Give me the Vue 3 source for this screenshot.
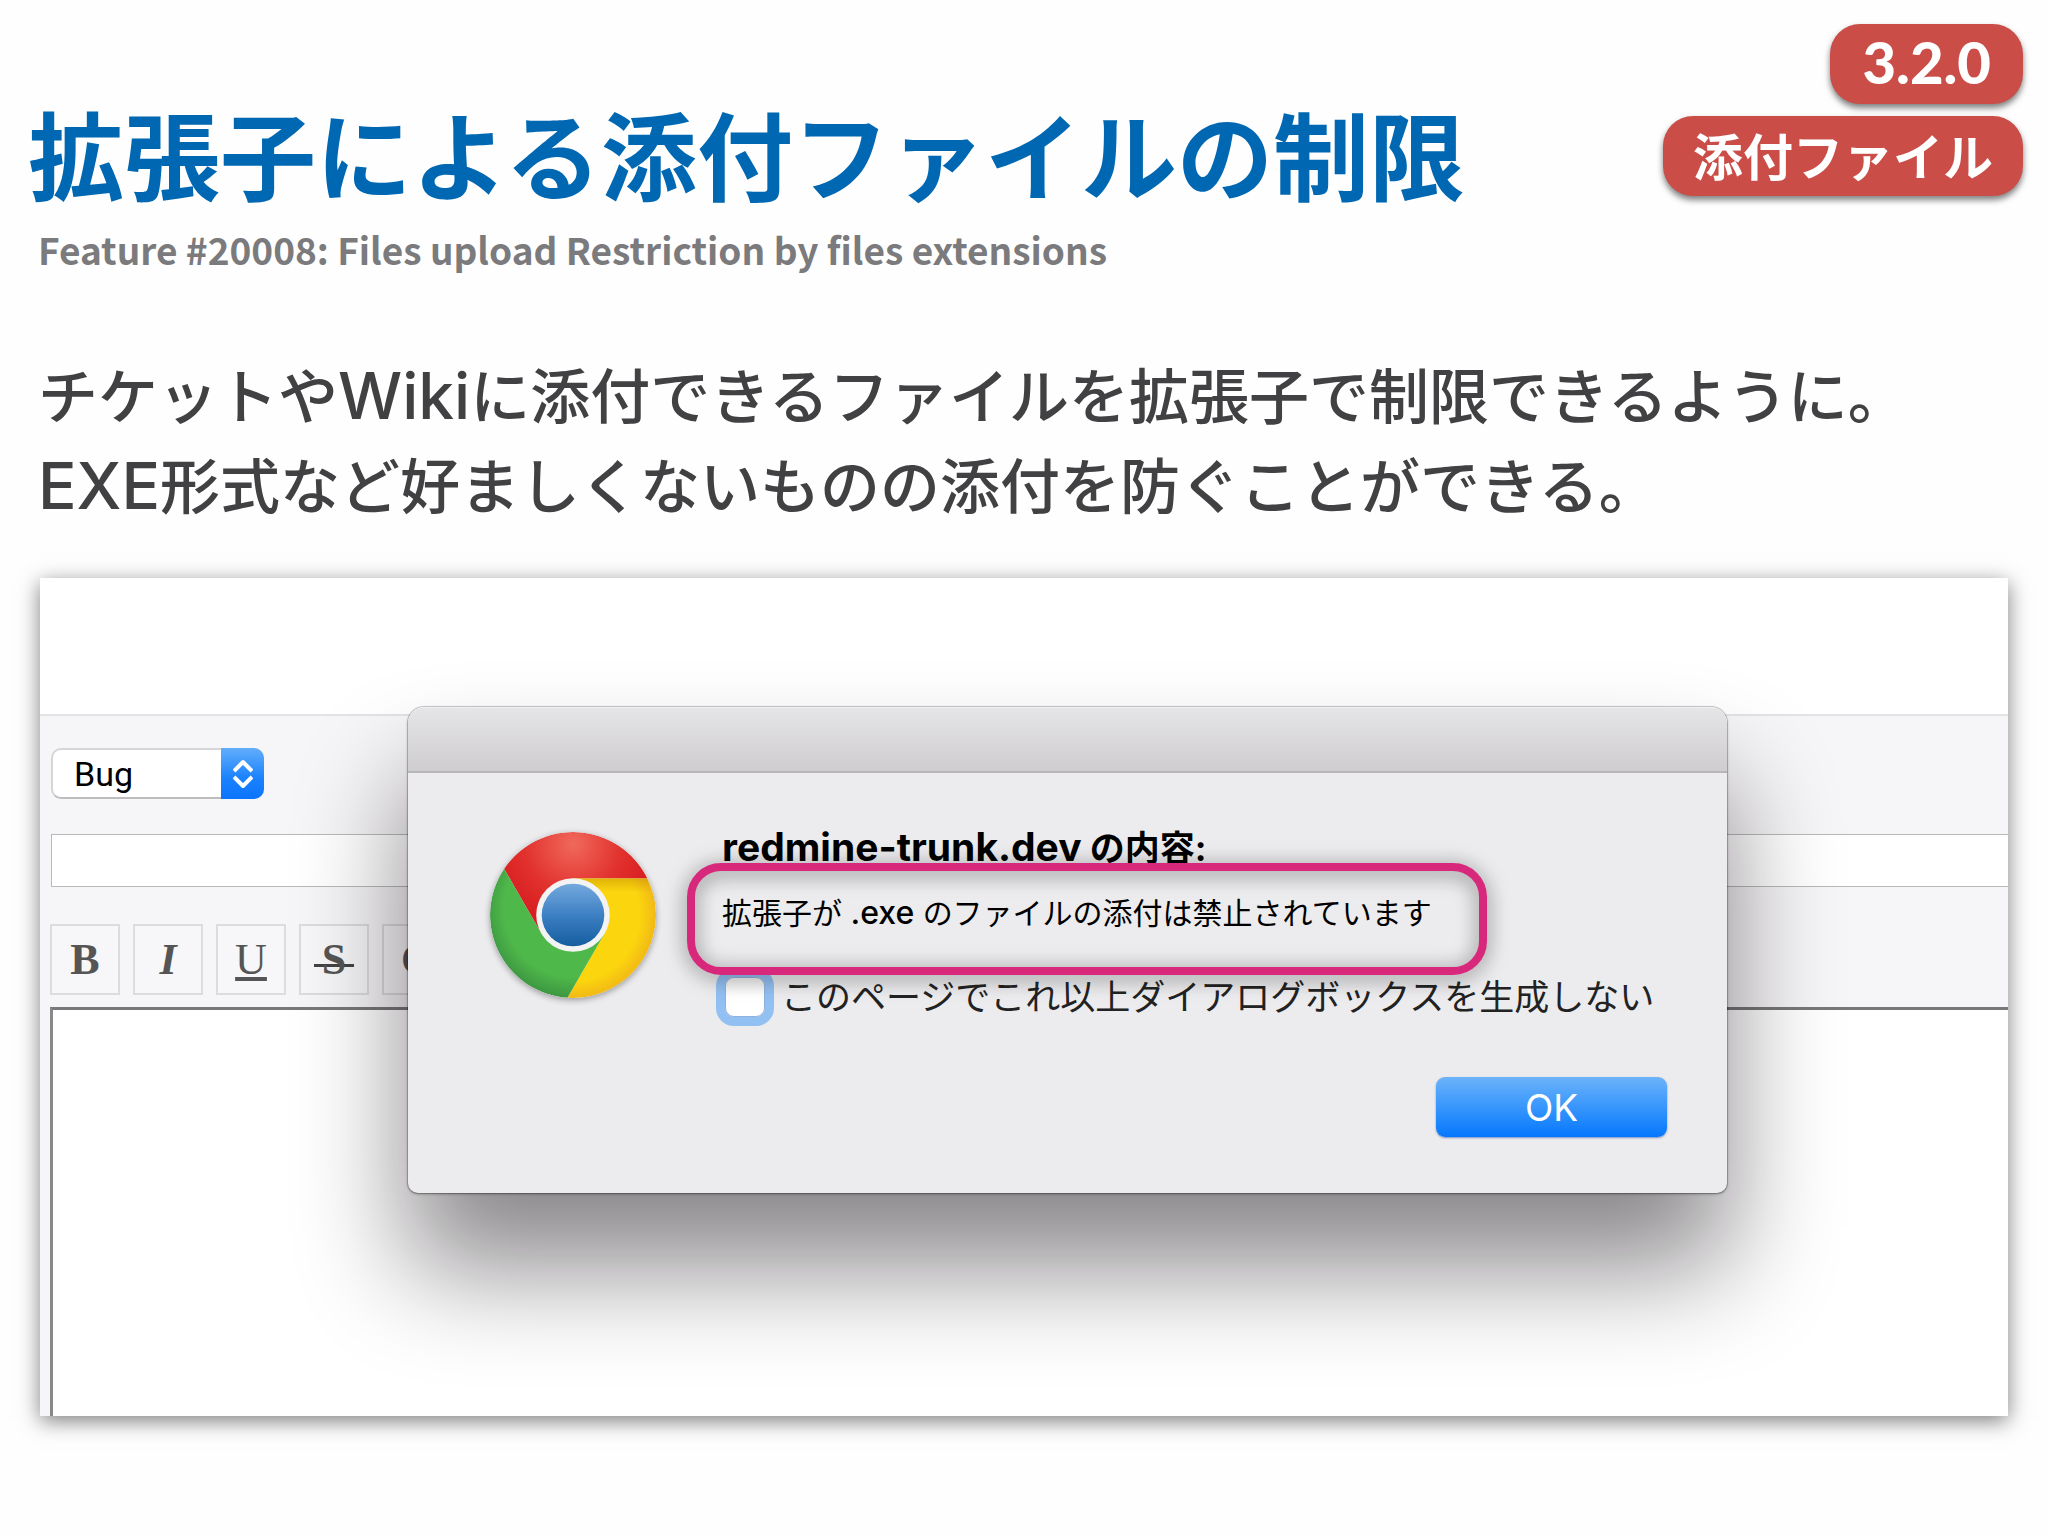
<template>
  <main class="slide">
    <header class="slide-header">
      <div class="heading">
        <h1 class="title">拡張子による添付ファイルの制限</h1>
        <p class="subtitle">Feature #20008: Files upload Restriction by files extensions</p>
      </div>
      <div class="badges">
        <span class="badge badge-version">3.2.0</span>
        <span class="badge">添付ファイル</span>
      </div>
    </header>

    <p class="description">
      チケットや<span class="latin">Wiki</span>に添付できるファイルを拡張子で制限できるように。<br>
      <span class="latin">EXE</span>形式など好ましくないものの添付を防ぐことができる。
    </p>

    <section class="capture">
      <form class="issue-form" @submit.prevent>
        <div class="tracker">
          <select v-model="tracker" class="tracker-select" aria-label="Tracker">
            <option v-for="name in trackers" :key="name" :value="name">{{ name }}</option>
          </select>
          <span class="tracker-arrows">
            <svg width="20" height="30" viewBox="0 0 20 30" fill="none" stroke="#fff" stroke-width="4" stroke-linejoin="round">
              <path d="M1 12 L10 3 L19 12 M1 18 L10 27 L19 18" />
            </svg>
          </span>
        </div>

        <input v-model="subject" class="subject" type="text" aria-label="Subject">

        <div class="toolbar">
          <button
            v-for="tool in tools"
            :key="tool.name"
            type="button"
            class="tool-btn"
            :class="'tool-' + tool.name"
            :title="tool.title"
          >
            <span class="tool-glyph">{{ tool.glyph }}</span>
          </button>
        </div>

        <textarea v-model="body" class="body-text" aria-label="Description"></textarea>
      </form>

      <div class="dialog" role="dialog" aria-labelledby="dialog-title">
        <div class="dialog-bar"></div>
        <div class="dialog-body">
          <svg class="chrome-icon" viewBox="0 0 166 166">
            <defs>
              <radialGradient id="red" cx="83" cy="12" r="80" gradientUnits="userSpaceOnUse">
                <stop offset="0" stop-color="#f0695c" />
                <stop offset="0.6" stop-color="#e2322e" />
                <stop offset="1" stop-color="#d81e21" />
              </radialGradient>
              <radialGradient id="yellow" cx="83" cy="83" r="83" gradientUnits="userSpaceOnUse">
                <stop offset="0.8" stop-color="#fbd50e" />
                <stop offset="1" stop-color="#f2b916" />
              </radialGradient>
              <radialGradient id="green" cx="83" cy="76" r="92" gradientUnits="userSpaceOnUse">
                <stop offset="0.75" stop-color="#4fb84a" />
                <stop offset="1" stop-color="#3a9340" />
              </radialGradient>
              <linearGradient id="blue" x1="0" y1="0" x2="0" y2="1">
                <stop offset="0" stop-color="#74a9dd" />
                <stop offset="0.5" stop-color="#3d80c4" />
                <stop offset="1" stop-color="#155d9f" />
              </linearGradient>
              <linearGradient id="shade" x1="0" y1="46" x2="0" y2="60" gradientUnits="userSpaceOnUse">
                <stop offset="0" stop-color="#b87e00" stop-opacity="0.4" />
                <stop offset="1" stop-color="#b87e00" stop-opacity="0" />
              </linearGradient>
            </defs>
            <path fill="url(#red)" d="M14.1 36.8 A83 83 0 0 1 157.5 46.4 L83 46.4 L51.3 101.3 Z" />
            <path fill="url(#yellow)" d="M157.5 46.4 A83 83 0 0 1 77.4 165.8 L114.7 101.3 L83 46.4 Z" />
            <path fill="url(#shade)" d="M83 46.4 H157.5 L161 60 H90 Z" />
            <path fill="url(#green)" d="M77.4 165.8 A83 83 0 0 1 14.1 36.8 L51.3 101.3 L114.7 101.3 Z" />
            <circle cx="83" cy="83" r="36.8" fill="#f3f3f3" />
            <circle cx="83" cy="83" r="31.3" fill="url(#blue)" />
          </svg>

          <div class="dialog-content">
            <h2 id="dialog-title" class="dialog-title"><span class="host">redmine-trunk.dev</span> の内容:</h2>
            <p class="dialog-message">
              拡張子が <span class="extension">.exe</span> のファイルの添付は禁止されています
              <span class="callout"></span>
            </p>
            <label class="suppress">
              <input v-model="suppress" class="suppress-box" type="checkbox">
              <span>このページでこれ以上ダイアログボックスを生成しない</span>
            </label>
            <button type="button" class="ok-btn">OK</button>
          </div>
        </div>
      </div>
    </section>
  </main>
</template>

<script setup>
import { ref } from 'vue';

const trackers = ['Bug', 'Feature', 'Support'];
const tracker = ref('Bug');
const subject = ref('');
const body = ref('');
const suppress = ref(false);

const tools = [
  { name: 'strong', glyph: 'B', title: 'Strong' },
  { name: 'em', glyph: 'I', title: 'Italic' },
  { name: 'ins', glyph: 'U', title: 'Underline' },
  { name: 'del', glyph: 'S', title: 'Deleted' },
  { name: 'code', glyph: 'C', title: 'Inline Code' }
];
</script>

<style>
body {
  margin: 0;
  background: #fefefe;
}
</style>

<style scoped>
.slide {
  box-sizing: border-box;
  min-height: 100vh;
  padding-bottom: 120px;
  font-family: "Liberation Sans", "Noto Sans CJK JP", sans-serif;
  color: #414042;
}

.slide-header {
  display: flex;
  justify-content: space-between;
  align-items: flex-start;
  padding: 24px 25px 0 28px;
}

.heading {
  padding-top: 72px;
}

.title {
  margin: 0;
  font-family: "Noto Sans CJK JP", sans-serif;
  font-size: 96px;
  line-height: 112px;
  font-weight: 700;
  color: #0068b2;
  white-space: nowrap;
}

.subtitle {
  margin: 13px 0 0 10px;
  font-family: "Noto Sans CJK JP", sans-serif;
  font-size: 37px;
  line-height: 56px;
  font-weight: 700;
  color: #7b7a7d;
  white-space: nowrap;
}

.badges {
  display: flex;
  flex-direction: column;
  align-items: flex-end;
  gap: 12px;
}

.badge {
  padding: 0 30px 4px;
  border-radius: 30px;
  background: #ca4e47;
  box-shadow: 0 4px 6px rgba(0, 0, 0, 0.5);
  color: #fff;
  font-family: "Noto Sans CJK JP", sans-serif;
  font-size: 50px;
  line-height: 76px;
  font-weight: 700;
  white-space: nowrap;
}

.badge-version {
  padding: 0 32px 4px;
  font-family: Lato, sans-serif;
  font-size: 58px;
  font-weight: 900;
}

.description {
  margin: 77px 38px 44px;
  font-size: 60px;
  line-height: 90px;
  font-weight: 500;
}

.latin {
  font-family: Inter, sans-serif;
  font-size: 64px;
  line-height: 60px;
}

.capture {
  position: relative;
  display: flex;
  flex-direction: column;
  box-sizing: border-box;
  min-height: 838px;
  margin: 0 40px;
  padding-top: 136px;
  overflow: hidden;
  background: #fff;
  box-shadow: 0 5px 20px rgba(0, 0, 0, 0.5);
}

.issue-form {
  flex: 1;
  display: flex;
  flex-direction: column;
  align-items: flex-start;
  padding: 32px 0 0 10px;
  border-top: 2px solid #e3e2e4;
  background: #f6f5f7;
}

.tracker {
  position: relative;
  width: 213px;
  margin-left: 1px;
}

.tracker-select {
  display: block;
  width: 100%;
  height: 51px;
  padding: 0 54px 0 21px;
  border: 2px solid #d6d5d7;
  border-bottom-color: #bdbcbe;
  border-radius: 10px;
  background: #fff;
  appearance: none;
  color: #000;
  font-family: Roboto, sans-serif;
  font-size: 34px;
}

.tracker-arrows {
  position: absolute;
  top: 0;
  right: 0;
  bottom: 0;
  display: flex;
  align-items: center;
  justify-content: center;
  width: 43px;
  border-radius: 0 10px 10px 0;
  background: linear-gradient(#62adfb, #1a82fd 60%, #0a74fd);
  pointer-events: none;
}

.subject {
  box-sizing: border-box;
  align-self: stretch;
  height: 53px;
  margin: 35px -4px 0 1px;
  padding: 0 10px;
  border: 1px solid #b9b8ba;
  background: #fff;
  font-size: 32px;
}

.toolbar {
  display: flex;
  gap: 13px;
  margin: 37px 0 12px;
}

.tool-btn {
  box-sizing: border-box;
  display: flex;
  align-items: center;
  justify-content: center;
  width: 70px;
  height: 71px;
  padding: 0;
  border: 2px solid #dcdbdd;
  background: #f7f6f8;
  color: #555;
  font-family: "Liberation Serif", serif;
  font-size: 44px;
  line-height: 48px;
}

.tool-strong,
.tool-em,
.tool-del,
.tool-code {
  font-weight: 700;
}

.tool-em {
  font-style: italic;
}

.tool-ins .tool-glyph {
  text-decoration: underline;
  text-decoration-thickness: 4px;
  text-underline-offset: 3px;
  text-decoration-skip-ink: none;
}

.tool-del .tool-glyph {
  padding: 0 8px;
  background: linear-gradient(#444, #444) center 28px / 100% 3px no-repeat;
}

.body-text {
  flex: 1;
  align-self: stretch;
  box-sizing: border-box;
  margin: 0 -4px -4px 0;
  padding: 10px;
  border: 3px solid #79777a;
  border-left-color: #8a888b;
  background: #fff;
  resize: none;
  font-size: 32px;
}

.dialog {
  position: absolute;
  top: 129px;
  left: 368px;
  right: 281px;
  border-radius: 16px 16px 10px 10px;
  background: #ecebed;
  box-shadow: 0 0 0 1px rgba(0, 0, 0, 0.18), 0 1px 3px rgba(0, 0, 0, 0.35), 0 74px 110px rgba(10, 5, 10, 0.48);
  color: #000;
}

.dialog-bar {
  height: 63px;
  border-top: 1px solid #f1f0f2;
  border-bottom: 2px solid #b8b6b9;
  border-radius: 16px 16px 0 0;
  background: linear-gradient(#e5e4e6, #cfcdd0);
}

.dialog-body {
  display: flex;
  align-items: flex-start;
  gap: 66px;
  padding: 54px 60px 56px 82px;
}

.chrome-icon {
  flex: none;
  width: 166px;
  height: 166px;
  margin-top: 5px;
  border-radius: 50%;
  box-shadow: 0 2px 6px rgba(0, 0, 0, 0.35);
}

.dialog-content {
  flex: 1;
  display: flex;
  flex-direction: column;
  font-family: Inter, "Noto Sans CJK JP", sans-serif;
  line-height: 44px;
  white-space: nowrap;
}

.dialog-title {
  margin: 0;
  font-size: 35px;
  line-height: 42px;
  font-weight: 700;
}

.host {
  font-size: 39px;
  line-height: 40px;
}

.dialog-message {
  position: relative;
  margin: 22px 0 40px;
  font-size: 30px;
}

.extension {
  font-size: 32px;
  line-height: 30px;
  font-weight: 500;
}

/* highlight frame laid over the message */
.callout {
  position: absolute;
  top: -28px;
  bottom: -40px;
  left: -35px;
  z-index: 1;
  box-sizing: border-box;
  width: 800px;
  border: 8px solid #d8287c;
  border-radius: 34px;
  filter: drop-shadow(0 3px 10px rgba(0, 0, 0, 0.55));
}

.suppress {
  display: flex;
  align-items: center;
  gap: 16px;
  padding-left: 3px;
  color: #222;
  font-size: 35px;
}

.suppress-box {
  flex: none;
  width: 40px;
  height: 40px;
  margin: 0;
  border: 1px solid #8fb2dc;
  border-radius: 9px;
  background: linear-gradient(#f2f2f2, #fff 50%);
  box-shadow: 0 0 0 9px #92c0f2;
  appearance: none;
}

.ok-btn {
  align-self: flex-end;
  width: 231px;
  height: 60px;
  margin-top: 58px;
  padding: 0;
  border: 0;
  border-radius: 9px;
  background: linear-gradient(#6cb3fa, #3d99fc 45%, #0577fd);
  box-shadow: 0 1px 2px rgba(0, 60, 160, 0.5);
  color: #fff;
  font-family: Inter, sans-serif;
  font-size: 37px;
}
</style>
